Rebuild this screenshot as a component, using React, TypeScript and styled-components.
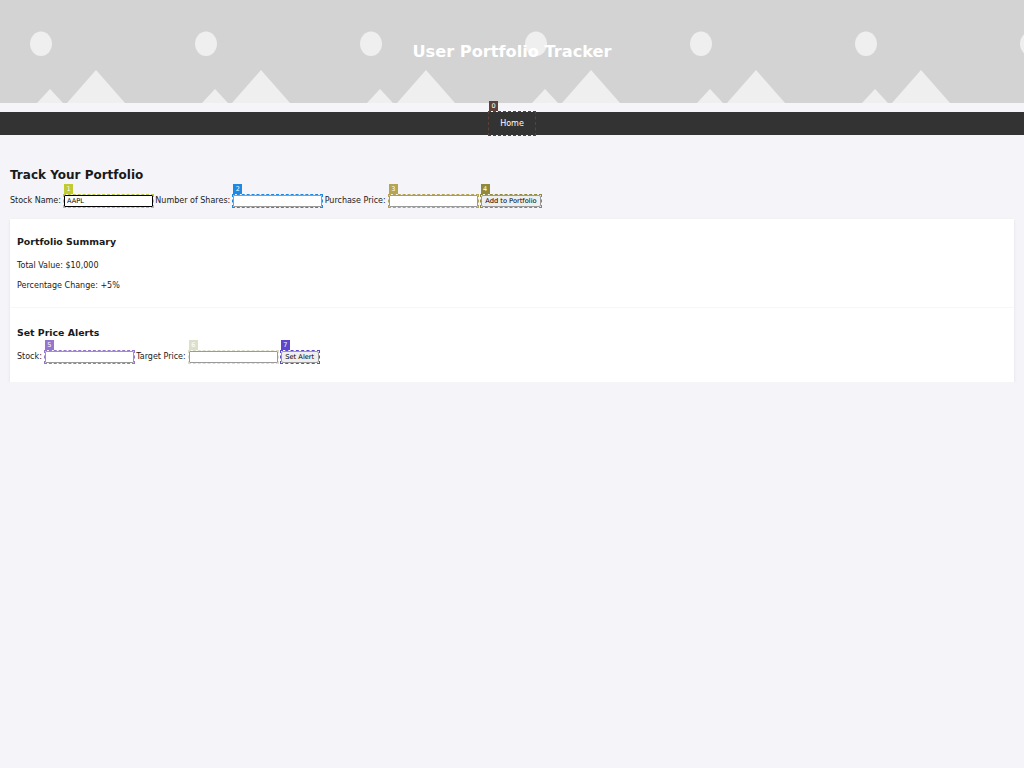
import React from "react";
import styled, { createGlobalStyle } from "styled-components";

const GlobalStyle = createGlobalStyle`
  html, body {
    margin: 0;
    padding: 0;
    background: #f4f4f9;
    font-family: "DejaVu Sans", "Liberation Sans", sans-serif;
    font-size: 8px;
    color: #1a1a1a;
  }
  * { box-sizing: border-box; }
`;

const patternSvg = encodeURIComponent(
  `<svg xmlns="http://www.w3.org/2000/svg" width="165" height="103" viewBox="0 0 165 103"><ellipse cx="41" cy="43.8" rx="11" ry="12.2" fill="#efefef"/><polygon points="37,103 50,89 63,103" fill="#efefef"/><polygon points="67,103 96,70 125,103" fill="#efefef"/></svg>`
);

const Header = styled.header`
  height: 103px;
  background-color: #d3d3d3;
  background-image: url("data:image/svg+xml,${patternSvg}");
  background-repeat: repeat-x;
  background-position: 0 0;
  display: flex;
  align-items: center;
  justify-content: center;
`;

const Title = styled.h1`
  margin: 0;
  color: #ffffff;
  font-size: 16.2px;
  font-weight: bold;
  line-height: 19px;
`;

const Nav = styled.nav`
  margin-top: 9px;
  height: 23px;
  background: #333333;
  display: flex;
  justify-content: center;
`;

const NavLink = styled.a`
  display: block;
  color: #ffffff;
  text-decoration: none;
  font-size: 8px;
  line-height: 23px;
  padding: 0 11px;
`;

const Main = styled.main`
  padding: 33px 10px 0 10px;
`;

const H2 = styled.h2`
  margin: 0;
  font-size: 12px;
  line-height: 14px;
  font-weight: bold;
`;

const Row = styled.div<{ $top: number }>`
  display: flex;
  align-items: center;
  gap: 2.4px;
  margin-top: ${(p) => p.$top}px;
  height: 12px;
`;

const Label = styled.label`
  font-size: 8px;
  line-height: 12px;
  white-space: nowrap;
  margin-right: 0.6px;
`;

const Input = styled.input<{ $dark?: boolean }>`
  display: block;
  width: 89px;
  height: 12px;
  margin: 0;
  padding: 0 2px;
  font-family: "DejaVu Sans", sans-serif;
  font-size: 6.6px;
  color: #000;
  background: #ffffff;
  border: 1px solid ${(p) => (p.$dark ? "#000000" : "#9a9a9a")};
  border-radius: 1px;
  outline: none;
`;

const Button = styled.button`
  display: block;
  height: 12px;
  margin: 0;
  padding: 0 3.5px;
  font-family: "DejaVu Sans", sans-serif;
  font-size: 6.7px;
  line-height: 10px;
  color: #000;
  background: #efefef;
  border: 1px solid #9a9a9a;
  border-radius: 2px;
  white-space: nowrap;
`;

const ButtonMark = styled.span`
  display: inline-flex;
  margin-left: 0.6px;
`;

const Card = styled.section`
  margin-top: 12px;
  background: #ffffff;
  box-shadow: 0 1px 3px rgba(0, 0, 0, 0.09);
`;

const CardSection = styled.div<{ $top: number; $bottom: number; $divider?: boolean }>`
  padding: ${(p) => p.$top}px 7px ${(p) => p.$bottom}px 7px;
  border-top: ${(p) => (p.$divider ? "1px solid #f7f7f7" : "none")};
`;

const H3 = styled.h3`
  margin: 0;
  font-size: 9.4px;
  line-height: 11px;
  font-weight: bold;
`;

const Para = styled.p<{ $top: number }>`
  margin: ${(p) => p.$top}px 0 0 0;
  font-size: 8px;
  line-height: 12px;
`;

const MarkWrap = styled.span<{ $color: string }>`
  position: relative;
  display: inline-flex;
  outline: 1px dashed ${(p) => p.$color};
  outline-offset: 0;
`;

const Badge = styled.span<{ $color: string; $text: string }>`
  position: absolute;
  left: 0;
  top: -11px;
  width: 9px;
  height: 10px;
  background: ${(p) => p.$color};
  color: ${(p) => p.$text};
  font-size: 6.5px;
  line-height: 10px;
  text-align: center;
`;

const Mark: React.FC<{ n: number; color: string; text?: string; children: React.ReactNode }> = ({
  n,
  color,
  text = "#ffffff",
  children,
}) => (
  <MarkWrap $color={color}>
    {children}
    <Badge $color={color} $text={text}>
      {n}
    </Badge>
  </MarkWrap>
);

export default function App() {
  return (
    <>
      <GlobalStyle />
      <Header>
        <Title>User Portfolio Tracker</Title>
      </Header>
      <Nav>
        <Mark n={0} color="#5d4037">
          <NavLink href="#">Home</NavLink>
        </Mark>
      </Nav>
      <Main>
        <H2>Track Your Portfolio</H2>
        <Row $top={13}>
          <Label>Stock Name:</Label>
          <Mark n={1} color="#c0ca33">
            <Input $dark defaultValue="AAPL" />
          </Mark>
          <Label>Number of Shares:</Label>
          <Mark n={2} color="#1e88e5">
            <Input />
          </Mark>
          <Label>Purchase Price:</Label>
          <Mark n={3} color="#b5a552">
            <Input />
          </Mark>
          <ButtonMark>
            <Mark n={4} color="#8f8a3c">
              <Button>Add to Portfolio</Button>
            </Mark>
          </ButtonMark>
        </Row>
        <Card>
          <CardSection $top={17} $bottom={15}>
            <H3>Portfolio Summary</H3>
            <Para $top={13}>Total Value: $10,000</Para>
            <Para $top={8}>Percentage Change: +5%</Para>
          </CardSection>
          <CardSection $top={19} $bottom={19} $divider>
            <H3>Set Price Alerts</H3>
            <Row $top={13}>
              <Label>Stock:</Label>
              <Mark n={5} color="#9575cd">
                <Input />
              </Mark>
              <Label>Target Price:</Label>
              <Mark n={6} color="#dcdfca">
                <Input />
              </Mark>
              <ButtonMark>
                <Mark n={7} color="#5e47cc">
                  <Button>Set Alert</Button>
                </Mark>
              </ButtonMark>
            </Row>
          </CardSection>
        </Card>
      </Main>
    </>
  );
}
